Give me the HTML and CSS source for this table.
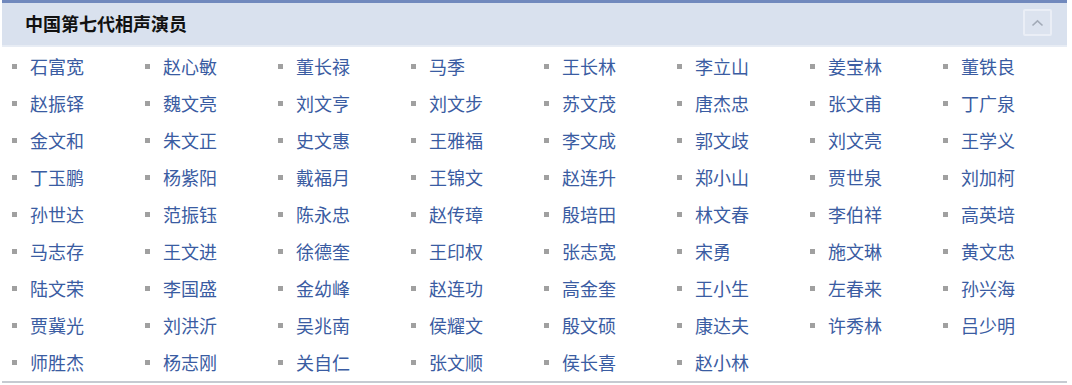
FILE: index.html
```html
<!DOCTYPE html>
<html lang="zh">
<head>
<meta charset="utf-8">
<title>中国第七代相声演员</title>
<link rel="stylesheet" href="styles.css">
</head>
<body>
<div class="panel">
  <div class="panel-head">
    <h2 class="panel-title">中国第七代相声演员</h2>
    <button class="toggle" type="button" aria-label="收起">
      <svg width="13" height="8" viewBox="0 0 13 8"><path d="M1.5 6.5 L6.5 1.8 L11.5 6.5" fill="none" stroke="#a3abb8" stroke-width="1.6"/></svg>
    </button>
  </div>
  <ul class="names">
    <li>石富宽</li><li>赵心敏</li><li>董长禄</li><li>马季</li><li>王长林</li><li>李立山</li><li>姜宝林</li><li>董铁良</li>
    <li>赵振铎</li><li>魏文亮</li><li>刘文亨</li><li>刘文步</li><li>苏文茂</li><li>唐杰忠</li><li>张文甫</li><li>丁广泉</li>
    <li>金文和</li><li>朱文正</li><li>史文惠</li><li>王雅福</li><li>李文成</li><li>郭文歧</li><li>刘文亮</li><li>王学义</li>
    <li>丁玉鹏</li><li>杨紫阳</li><li>戴福月</li><li>王锦文</li><li>赵连升</li><li>郑小山</li><li>贾世泉</li><li>刘加柯</li>
    <li>孙世达</li><li>范振钰</li><li>陈永忠</li><li>赵传璋</li><li>殷培田</li><li>林文春</li><li>李伯祥</li><li>高英培</li>
    <li>马志存</li><li>王文进</li><li>徐德奎</li><li>王印权</li><li>张志宽</li><li>宋勇</li><li>施文琳</li><li>黄文忠</li>
    <li>陆文荣</li><li>李国盛</li><li>金幼峰</li><li>赵连功</li><li>高金奎</li><li>王小生</li><li>左春来</li><li>孙兴海</li>
    <li>贾冀光</li><li>刘洪沂</li><li>吴兆南</li><li>侯耀文</li><li>殷文硕</li><li>康达夫</li><li>许秀林</li><li>吕少明</li>
    <li>师胜杰</li><li>杨志刚</li><li>关自仁</li><li>张文顺</li><li>侯长喜</li><li>赵小林</li>
  </ul>
</div>
</body>
</html>
```

FILE: styles.css
```css
html, body {
  margin: 0;
  padding: 0;
  background: #ffffff;
}

body {
  font-family: "Noto Sans CJK SC", "Noto Sans", sans-serif;
}

.panel {
  width: 1065px;
  margin-left: 2px;
  border-bottom: 2px solid #c6cad1;
}

.panel-head {
  box-sizing: border-box;
  height: 47px;
  border-top: 3px solid #7189bd;
  border-bottom: 2px solid #e7ecf4;
  background: #d9e1ee;
  display: flex;
  align-items: center;
  justify-content: space-between;
  padding: 0 15px 0 23px;
}

.panel-title {
  margin: 0;
  font-size: 18px;
  font-weight: 700;
  color: #111111;
  line-height: 24px;
  margin-top: -2px;
}

.toggle {
  box-sizing: border-box;
  width: 29px;
  height: 27px;
  margin-top: -3px;
  border: 2px solid #eaeef6;
  border-radius: 2px;
  background: #dce3ef;
  display: flex;
  align-items: center;
  justify-content: center;
  padding: 0;
}

.names {
  list-style: none;
  margin: 0;
  padding: 1px 0 0 10px;
  display: grid;
  grid-template-columns: repeat(8, 133px);
  grid-auto-rows: 37px;
}

.names li {
  display: flex;
  align-items: center;
  gap: 13px;
  font-size: 18px;
  color: #3a5ca2;
  line-height: 37px;
  white-space: nowrap;
}

.names li::before {
  content: "";
  width: 5px;
  height: 5px;
  background: #a0a0a0;
  flex: none;
}
```
